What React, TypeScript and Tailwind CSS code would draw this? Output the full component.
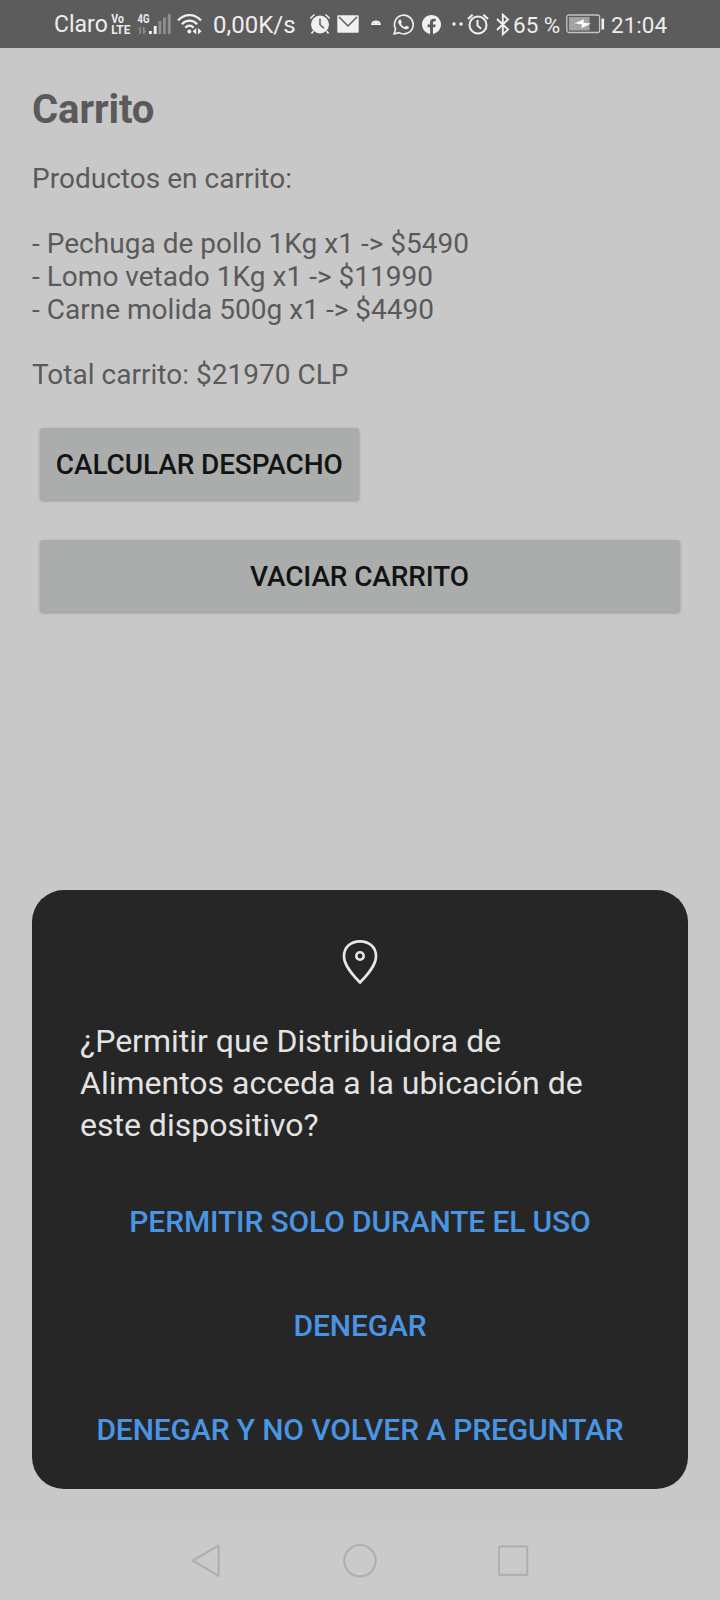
import type { ReactNode } from "react";

const cartLines = [
  "Productos en carrito:",
  "",
  "- Pechuga de pollo 1Kg x1 -> $5490",
  "- Lomo vetado 1Kg x1 -> $11990",
  "- Carne molida 500g x1 -> $4490",
  "",
  "Total carrito: $21970 CLP",
];

function SignalIcon() {
  return (
    <svg className="ml-[6px] h-[24px] w-[36px] shrink-0" viewBox="0 0 36 24">
      <text x="0.5" y="10.8" fontSize="12.8" fontWeight="700" fill="#ececec" textLength="12" lengthAdjust="spacingAndGlyphs">4G</text>
      <g fill="#8f8f8f">
        <path d="M2.5 15v7h1.6v-7zM0.5 17.4L3.3 14.3v3.1zM6 15v7h1.6v-7zM6.8 22l3-3.2H6.8z" />
        <path d="M21.5 9h2.8v13h-2.8zM26 5.500h2.800v16.500h-2.800zM30.800 2h2.900v20h-2.900z" />
      </g>
      <path d="M12 19h2.800v3h-2.800zM16.800 14h2.800v8h-2.800z" fill="#f4f4f4" />
    </svg>
  );
}

function WifiIcon() {
  return (
    <svg className="ml-[4px] h-[24px] w-[26px] shrink-0" viewBox="0 0 26 24" fill="none" stroke="#f0f0f0" strokeWidth="2.300">
      <path d="M1 8.500C7.500 1.300 17.500 1.300 24 8.500M4.800 12.300C9.500 7.400 15.500 7.400 20.200 12.300M8.300 15.800C10.900 13 14.100 13 16.700 15.800" />
      <circle cx="12.300" cy="19.500" r="2" fill="#f0f0f0" stroke="none" />
      <path d="M19.300 16v6.500l-3.600-3.300zM21 16v6.500l3.600-3.300z" fill="#f0f0f0" stroke="none" />
    </svg>
  );
}

function AlarmFilled() {
  return (
    <svg className="h-[22px] w-[22px] shrink-0" viewBox="0 0 22 22" fill="none">
      <circle cx="11" cy="11.500" r="9" fill="#f0f0f0" />
      <path d="M1.200 5.500L5.500 1.500M20.800 5.500L16.500 1.500M4.500 18L2.500 20.500M17.500 18L19.500 20.500" stroke="#f0f0f0" strokeWidth="1.500" />
      <path d="M11 5.500v6.200l4 3.600" stroke="#5c5c5c" strokeWidth="1.500" />
    </svg>
  );
}

function MailIcon() {
  return (
    <svg className="ml-[6px] h-[18px] w-[22px] shrink-0" viewBox="0 0 22 18">
      <rect x="0.300" y="0.300" width="21.400" height="17.400" rx="0.800" fill="#f0f0f0" />
      <path d="M2 2l9 9 9-9" fill="none" stroke="#5c5c5c" strokeWidth="1.500" />
    </svg>
  );
}

function AndroidIcon() {
  return (
    <svg className="ml-[12px] h-[12px] w-[10px] shrink-0" viewBox="0 0 10 12">
      <path d="M0 7C0.300 3.700 2.200 2.500 5 2.500S9.700 3.700 10 7z" fill="#f0f0f0" />
      <path d="M1 8h8l-2 2.500H3z" fill="#525252" />
      <circle cx="3" cy="5.200" r="0.500" fill="#777" />
      <circle cx="7" cy="5.200" r="0.500" fill="#777" />
    </svg>
  );
}

function WhatsAppIcon() {
  return (
    <svg className="ml-[12px] h-[21px] w-[21px] shrink-0" viewBox="0 0 24 24" fill="#f0f0f0">
      <path d="M17.472 14.382c-.297-.149-1.758-.867-2.030-.967-.273-.099-.471-.148-.670.150-.197.297-.767.966-.940 1.164-.173.199-.347.223-.644.075-.297-.150-1.255-.463-2.390-1.475-.883-.788-1.480-1.761-1.653-2.059-.173-.297-.018-.458.130-.606.134-.133.298-.347.446-.520.149-.174.198-.298.298-.497.099-.198.050-.371-.025-.520-.075-.149-.669-1.612-.916-2.207-.242-.579-.487-.500-.669-.510-.173-.008-.371-.010-.570-.010-.198 0-.520.074-.792.372-.272.297-1.040 1.016-1.040 2.479 0 1.462 1.065 2.875 1.213 3.074.149.198 2.096 3.200 5.077 4.487.709.306 1.262.489 1.694.625.712.227 1.360.195 1.871.118.571-.085 1.758-.719 2.006-1.413.248-.694.248-1.289.173-1.413-.074-.124-.272-.198-.570-.347" />
      <path d="M1.300 22.700l1.600-5.700A10.700 10.700 0 1 1 7 21.300z" fill="none" stroke="#f0f0f0" strokeWidth="1.900" />
    </svg>
  );
}

function FacebookIcon() {
  return (
    <svg className="ml-[8px] h-[19px] w-[19px] shrink-0" viewBox="0 0 24 24" fill="#f0f0f0">
      <path d="M24 12.073c0-6.627-5.373-12-12-12s-12 5.373-12 12c0 5.990 4.388 10.954 10.125 11.854v-8.385H7.078v-3.470h3.047V9.430c0-3.007 1.792-4.669 4.533-4.669 1.312 0 2.686.235 2.686.235v2.953H15.830c-1.491 0-1.956.925-1.956 1.874v2.250h3.328l-.532 3.470h-2.796v8.385C19.612 23.027 24 18.062 24 12.073z" />
    </svg>
  );
}

function AlarmOutline() {
  return (
    <svg className="ml-[4px] h-[22px] w-[22px] shrink-0" viewBox="0 0 22 22" fill="none" stroke="#f0f0f0">
      <circle cx="11" cy="12" r="8.500" strokeWidth="2" />
      <path d="M1 6L5.600 1.700M21 6L16.400 1.700" strokeWidth="2.200" />
      <path d="M10.500 7v5.500l3.600 3.200" strokeWidth="2" />
    </svg>
  );
}

function BluetoothIcon() {
  return (
    <svg className="ml-[7px] h-[23px] w-[14px] shrink-0" viewBox="0 0 14 23" fill="none" stroke="#f0f0f0" strokeWidth="1.900">
      <path d="M1 6l11 10.600-5.200 4.700V1.700L12 6.400 1 17" />
    </svg>
  );
}

function BatteryIcon() {
  return (
    <svg className="h-[20px] w-[39px] shrink-0" viewBox="0 0 39 20">
      <rect x="0.800" y="1" width="32.800" height="17.500" rx="2" fill="none" stroke="#c4c4c4" strokeWidth="1.300" />
      <rect x="3" y="3" width="20.500" height="13.500" fill="#a3a3a3" />
      <path d="M8.500 9.300L18 5.300l-.6 3.400 7.600.8-9.500 4.700.6-3.800z" fill="#fafafa" />
      <rect x="35.500" y="4.500" width="2.600" height="11" rx="0.600" fill="#f0f0f0" />
    </svg>
  );
}

function StatusBar() {
  return (
    <header className="flex h-12 items-center bg-[#5c5c5c] pl-[54px] text-[22.5px] leading-[26px] whitespace-nowrap text-[#ededed]">
      <span className="w-[57px] shrink-0 pt-[2px] text-[23px]">Claro</span>
      <svg className="h-[24px] w-[20px] shrink-0" viewBox="0 0 20 24" fill="#ececec" fontWeight="700">
        <text x="0.300" y="10.800" fontSize="12" textLength="12.500" lengthAdjust="spacingAndGlyphs">Vo</text>
        <text x="0.300" y="22" fontSize="12.600" textLength="19" lengthAdjust="spacingAndGlyphs">LTE</text>
      </svg>
      <SignalIcon />
      <WifiIcon />
      <span className="ml-[10px] w-[96px] shrink-0 pt-[2px] text-[24px]">0,00K/s</span>
      <AlarmFilled />
      <MailIcon />
      <AndroidIcon />
      <WhatsAppIcon />
      <FacebookIcon />
      <svg className="ml-[11px] h-[4px] w-[11px] shrink-0" viewBox="0 0 11 4" fill="#f0f0f0">
        <circle cx="2" cy="2" r="1.700" />
        <circle cx="9" cy="2" r="1.700" />
      </svg>
      <AlarmOutline />
      <BluetoothIcon />
      <span className="ml-[3px] w-[53px] shrink-0 pt-[2px]">65 %</span>
      <BatteryIcon />
      <span className="ml-[6px] pt-[2px]">21:04</span>
    </header>
  );
}

function CartButton({ children, wide }: { children: ReactNode; wide?: boolean }) {
  return (
    <button
      className={`h-[72px] rounded-[3px] bg-[#abadac] pt-[3px] text-[28px] font-medium tracking-[-0.12px] text-[#121413] shadow-[0_1px_3px_rgba(0,0,0,0.25)] ${
        wide ? "w-[640px]" : "w-[319.5px]"
      }`}
    >
      {children}
    </button>
  );
}

function PermissionDialog() {
  return (
    <section className="mx-8 flex h-[599px] flex-col items-center rounded-[32px] bg-[#262626] pt-[48px]">
      <svg className="h-[48px] w-[48px]" viewBox="0 0 48 48" fill="none" stroke="#e6e6e6">
        <path d="M24 44.500C19 39 8 28.500 8 18.200C8 9 15 3.300 24 3.300S40 9 40 18.200C40 28.500 29 39 24 44.500Z" strokeWidth="2.700" strokeLinejoin="round" />
        <circle cx="24" cy="18" r="3.700" strokeWidth="2.600" />
      </svg>
      <p className="mt-[34px] w-full pl-12 text-[32px] leading-[42px] text-[#e3e3e3]">
        ¿Permitir que Distribuidora de
        <br />
        Alimentos acceda a la ubicación de
        <br />
        este dispositivo?
      </p>
      <div className="mt-[23px] flex w-full flex-col text-[30px] font-medium tracking-[-0.14px] text-[#4a95e3]">
        <button className="h-[104px]">PERMITIR SOLO DURANTE EL USO</button>
        <button className="h-[104px]">DENEGAR</button>
        <button className="h-[104px]">DENEGAR Y NO VOLVER A PREGUNTAR</button>
      </div>
    </section>
  );
}

function NavigationBar() {
  return (
    <nav className="mt-[33px] flex h-[78px] items-start justify-between bg-[#cacaca] px-[190px] pt-[20px]">
      <svg className="h-[37px] w-[32px]" viewBox="0 0 32 37" fill="none" stroke="#b0b0b0" strokeWidth="2.200" strokeLinejoin="round">
        <path d="M28.700 3.500V34L2.800 18.500z" />
      </svg>
      <svg className="h-[37px] w-[36px]" viewBox="0 0 36 37" fill="none" stroke="#b0b0b0" strokeWidth="2.200">
        <circle cx="18" cy="18.700" r="15.700" />
      </svg>
      <svg className="h-[37px] w-[32px]" viewBox="0 0 32 37" fill="none" stroke="#b0b0b0" strokeWidth="2.200">
        <rect x="0.700" y="4.400" width="28.500" height="28.500" rx="1" />
      </svg>
    </nav>
  );
}

export default function App() {
  return (
    <div className="flex h-[1600px] w-[720px] flex-col overflow-hidden bg-[#c8c8c8] font-['Roboto',sans-serif]">
      <StatusBar />
      <main className="flex h-[842px] flex-col px-8 pt-[38px] text-[#5a5a5a]">
        <h1 className="text-[40px] leading-[47px] font-bold tracking-[-0.1px]">Carrito</h1>
        <div className="mt-[30px] text-[28px] leading-[32.7px] tracking-[0.02px]">
          {cartLines.map((line, i) => (
            <p key={i} className="h-[32.7px] whitespace-pre">
              {line}
            </p>
          ))}
        </div>
        <div className="mt-[36px] flex flex-col items-start gap-[40px] pl-[7.5px]">
          <CartButton>CALCULAR DESPACHO</CartButton>
          <CartButton wide>VACIAR CARRITO</CartButton>
        </div>
      </main>
      <PermissionDialog />
      <NavigationBar />
    </div>
  );
}
